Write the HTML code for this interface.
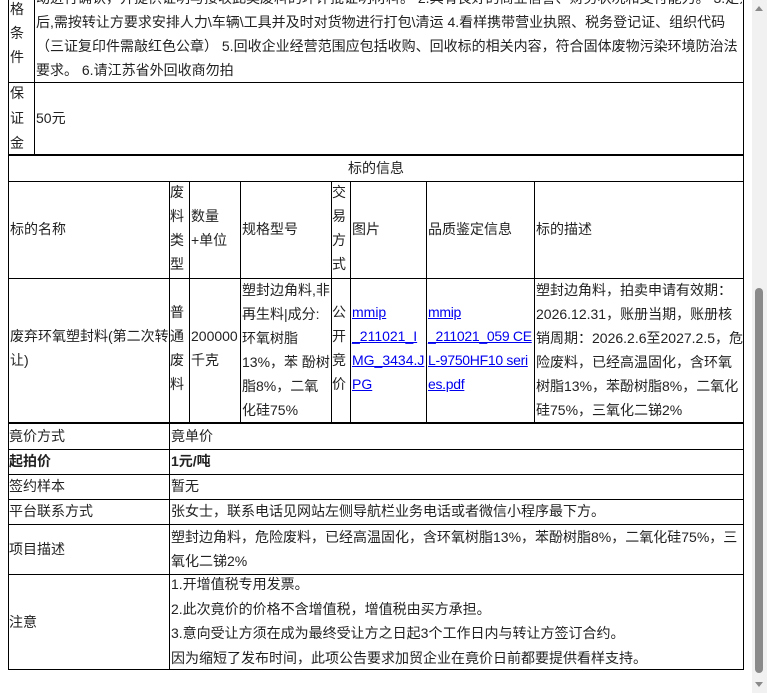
<!DOCTYPE html>
<html><head><meta charset="utf-8"><style>
body{margin:0;width:767px;height:693px;overflow:hidden;background:#fff;position:relative;font-family:"Liberation Sans","Noto Sans CJK SC",sans-serif;font-size:14px;color:#222}
.h{position:absolute;height:1px;background:#000}
.v{position:absolute;width:1px;background:#000}
.t{position:absolute;line-height:24px;white-space:nowrap}
a{color:#00e;text-decoration:underline}
</style></head><body>
<div class="v" style="left:8px;top:0;height:423px"></div>
<div class="v" style="left:34px;top:0;height:155px"></div>
<div class="v" style="left:743px;top:0;height:423px"></div>
<div class="h" style="left:8px;top:82px;width:736px"></div>
<div class="h" style="left:8px;top:154px;width:736px;height:2px"></div>
<div class="h" style="left:8px;top:181px;width:736px"></div>
<div class="h" style="left:8px;top:278px;width:736px"></div>
<div class="h" style="left:8px;top:422px;width:736px;height:2px"></div>
<div class="v" style="left:169px;top:181px;height:242px"></div>
<div class="v" style="left:189px;top:181px;height:242px"></div>
<div class="v" style="left:240px;top:181px;height:242px"></div>
<div class="v" style="left:331px;top:181px;height:242px"></div>
<div class="v" style="left:350px;top:181px;height:242px"></div>
<div class="v" style="left:426px;top:181px;height:242px"></div>
<div class="v" style="left:534px;top:181px;height:242px"></div>

<div class="t" style="left:10px;top:-3px">格<br>条<br>件</div>
<div class="t" style="left:36px;top:-14px;width:706px;overflow:hidden">动进行确认，并提供证明与接收此类废料的环评批证明材料。 2.具有良好的商业信誉、财务状况和支付能力。 3.定为<br>后,需按转让方要求安排人力\车辆\工具并及时对货物进行打包\清运 4.看样携带营业执照、税务登记证、组织代码<br>（三证复印件需敲红色公章） 5.回收企业经营范围应包括收购、回收标的相关内容，符合固体废物污染环境防治法<br>要求。 6.请江苏省外回收商勿拍</div>
<div class="t" style="left:10px;top:81px;line-height:25px">保<br>证<br>金</div>
<div class="t" style="left:36px;top:106px">50元</div>
<div class="t" style="left:8px;width:736px;text-align:center;top:156px">标的信息</div>
<div class="t" style="left:10px;top:217px">标的名称</div>
<div class="t" style="left:170px;top:180px">废<br>料<br>类<br>型</div>
<div class="t" style="left:191px;top:204px">数量<br>+单位</div>
<div class="t" style="left:242px;top:217px">规格型号</div>
<div class="t" style="left:332px;top:180px">交<br>易<br>方<br>式</div>
<div class="t" style="left:352px;top:217px">图片</div>
<div class="t" style="left:428px;top:217px">品质鉴定信息</div>
<div class="t" style="left:536px;top:217px">标的描述</div>

<div class="t" style="left:10px;top:324px">废弃环氧塑封料(第二次转<br>让)</div>
<div class="t" style="left:170px;top:300px">普<br>通<br>废<br>料</div>
<div class="t" style="left:191px;top:324px">200000<br>千克</div>
<div class="t" style="left:242px;top:278px">塑封边角料,非<br>再生料|成分:<br>环氧树脂<br>13%，苯 酚树<br>脂8%，二氧<br>化硅75%</div>
<div class="t" style="left:332px;top:300px">公<br>开<br>竞<br>价</div>
<div class="t" style="left:352px;top:300px"><a>mmip<br>_211021_I<br>MG_3434.J<br>PG</a></div>
<div class="t" style="left:428px;top:300px;letter-spacing:-0.3px"><a>mmip<br>_211021_059 CE<br>L-9750HF10 seri<br>es.pdf</a></div>
<div class="t" style="left:536px;top:278px">塑封边角料，拍卖申请有效期：<br>2026.12.31，账册当期，账册核<br>销周期：2026.2.6至2027.2.5，危<br>险废料，已经高温固化，含环氧<br>树脂13%，苯酚树脂8%，二氧化<br>硅75%，三氧化二锑2%</div>

<div class="v" style="left:169px;top:423px;height:247px"></div>
<div class="v" style="left:8px;top:423px;height:247px"></div>
<div class="v" style="left:743px;top:423px;height:247px"></div>
<div class="h" style="left:8px;top:449px;width:736px"></div>
<div class="h" style="left:8px;top:474px;width:736px"></div>
<div class="h" style="left:8px;top:499px;width:736px"></div>
<div class="h" style="left:8px;top:524px;width:736px"></div>
<div class="h" style="left:8px;top:574px;width:736px"></div>
<div class="h" style="left:8px;top:669px;width:736px"></div>

<div class="t" style="left:9px;top:424px">竟价方式</div><div class="t" style="left:171px;top:424px">竟单价</div>
<div class="t" style="left:9px;top:449px;font-weight:bold">起拍价</div><div class="t" style="left:171px;top:449px;font-weight:bold">1元/吨</div>
<div class="t" style="left:9px;top:474px">签约样本</div><div class="t" style="left:171px;top:474px">暂无</div>
<div class="t" style="left:9px;top:499px">平台联系方式</div><div class="t" style="left:171px;top:499px">张女士，联系电话见网站左侧导航栏业务电话或者微信小程序最下方。</div>
<div class="t" style="left:9px;top:537px">项目描述</div><div class="t" style="left:171px;top:525px">塑封边角料，危险废料，已经高温固化，含环氧树脂13%，苯酚树脂8%，二氧化硅75%，三<br>氧化二锑2%</div>
<div class="t" style="left:9px;top:610px">注意</div><div class="t" style="left:171px;top:572px;line-height:24.5px">1.开增值税专用发票。<br>2.此次竟价的价格不含增值税，增值税由买方承担。<br>3.意向受让方须在成为最终受让方之日起3个工作日内与转让方签订合约。<br>因为缩短了发布时间，此项公告要求加贸企业在竟价日前都要提供看样支持。</div>

<div style="position:absolute;left:752px;top:0;width:15px;height:693px;background:#f1f1f1"></div>
<div style="position:absolute;left:755px;top:288px;width:8px;height:385px;background:#8a8a8a;border-radius:4px"></div>
<div style="position:absolute;left:755px;top:6px;width:0;height:0;border-left:4px solid transparent;border-right:4px solid transparent;border-bottom:5px solid #8a8a8a"></div>
<div style="position:absolute;left:755px;top:682px;width:0;height:0;border-left:4px solid transparent;border-right:4px solid transparent;border-top:5px solid #8a8a8a"></div>
</body></html>
